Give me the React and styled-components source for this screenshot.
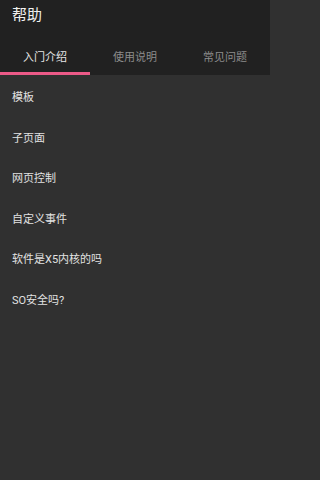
import React, { useState } from "react";
import styled, { createGlobalStyle } from "styled-components";

const GlobalStyle = createGlobalStyle`
	html, body {
		margin: 0;
		padding: 0;
		background: #303030;
	}
	body {
		font-family: Roboto, "Noto Sans CJK SC", sans-serif;
	}
`;

const tabs = ["入门介绍", "使用说明", "常见问题"];

const topics = [
	"模板",
	"子页面",
	"网页控制",
	"自定义事件",
	"软件是X5内核的吗",
	"SO安全吗?",
];

function App() {
	const [active, setActive] = useState(0);

	return (
		<>
			<GlobalStyle />
			<Page>
				<Header>
					<Title>帮助</Title>
					<Tabs>
						{tabs.map((tab, i) => (
							<Tab key={tab} $active={i === active} onClick={() => setActive(i)}>
								{tab}
							</Tab>
						))}
					</Tabs>
				</Header>
				<List>
					{topics.map((topic) => (
						<Item key={topic}>{topic}</Item>
					))}
				</List>
			</Page>
		</>
	);
}

const Page = styled.div`
	width: 270px;
	height: 480px;
	background: #303030;
	display: flex;
	flex-direction: column;
`;

const Header = styled.header`
	background: #212121;
	display: flex;
	flex-direction: column;
`;

const Title = styled.h1`
	margin: 0;
	height: 30px;
	padding: 0 12px;
	font-size: 15px;
	font-weight: 400;
	line-height: 30px;
	color: #f0f0f0;
`;

const Tabs = styled.nav`
	display: grid;
	grid-template-columns: repeat(3, 1fr);
`;

const Tab = styled.button`
	height: 45px;
	padding: 12px 0 0;
	border: none;
	border-bottom: 3px solid ${(p) => (p.$active ? "#ec5a88" : "transparent")};
	background: none;
	font-family: inherit;
	font-size: 11px;
	line-height: 1;
	color: ${(p) => (p.$active ? "#e6e6e6" : "#8c8c8c")};
	cursor: pointer;
`;

const List = styled.ul`
	list-style: none;
	margin: 0;
	padding: 1px 0 0;
`;

const Item = styled.li`
	height: 40.5px;
	padding: 0 12px;
	display: flex;
	align-items: center;
	font-size: 11px;
	color: #e2e2e2;
`;

export default App;
